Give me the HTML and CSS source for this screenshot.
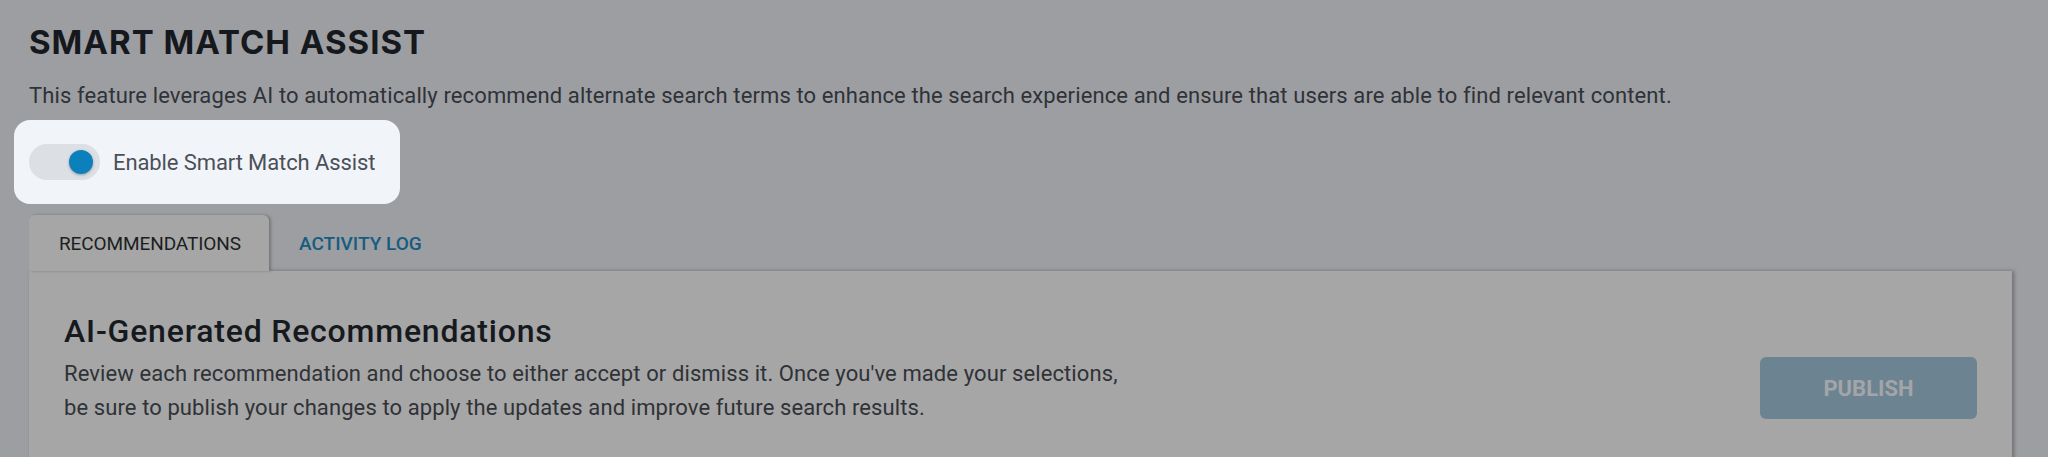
FILE: index.html
```html
<!DOCTYPE html>
<html lang="en">
<head>
  <meta charset="UTF-8">
  <title>Smart Match Assist</title>
  <meta name="viewport" content="width=device-width, initial-scale=1">
  <link rel="stylesheet" href="styles.css">
</head>
<body>

<div class="page">
  <h1 class="page-title">SMART MATCH ASSIST</h1>
  <p class="page-intro">This feature leverages AI to automatically recommend alternate search terms to enhance the search experience and ensure that users are able to find relevant content.</p>

  <label class="switch-row">
    <span class="switch on"><span class="knob"></span></span>
    <span class="switch-label">Enable Smart Match Assist</span>
  </label>

  <div class="tabs">
    <button class="tab active">RECOMMENDATIONS</button>
    <button class="tab">ACTIVITY LOG</button>
  </div>

  <div class="panel">
    <div class="panel-head">
      <div class="panel-text">
        <h2 class="panel-title">AI-Generated Recommendations</h2>
        <p class="panel-desc">Review each recommendation and choose to either accept or dismiss it. Once you've made your selections, be sure to publish your changes to apply the updates and improve future search results.</p>
      </div>
      <button class="btn-publish" disabled>PUBLISH</button>
    </div>
  </div>
</div>

</body>
</html>
```

FILE: styles.css
```css
* {
  box-sizing: border-box;
}

body {
  margin: 0;
  background: #9d9ea2;
  font-family: Roboto, Arial, sans-serif;
  color: #2f3237;
  overflow: hidden;
}

.page {
  padding: 22px 36px 0 29px;
}

.page-title {
  margin: 0;
  font-family: Inter, Arial, sans-serif;
  font-size: 33px;
  line-height: 40px;
  font-weight: 700;
  letter-spacing: 1px;
  color: #15181d;
}

.page-intro {
  margin: 19px 0 0;
  font-size: 22px;
  line-height: 30px;
  letter-spacing: 0.12px;
  color: #2f3237;
}

/* highlighted toggle row */
.switch-row {
  display: flex;
  align-items: center;
  gap: 13px;
  width: fit-content;
  height: 84px;
  margin: 9px 0 0 -15px;
  padding: 0 25px 0 15px;
  background: #f1f4f9;
  border-radius: 16px;
  cursor: pointer;
}

.switch {
  display: flex;
  align-items: center;
  width: 71px;
  height: 36px;
  padding: 0 7px;
  background: #dcdfe4;
  border-radius: 18px;
}

.switch.on {
  justify-content: flex-end;
}

.knob {
  width: 24px;
  height: 24px;
  border-radius: 50%;
  background: #0b80bd;
  box-shadow: 0 1px 3px rgba(0, 0, 0, 0.3);
}

.switch-label {
  font-size: 22px;
  letter-spacing: -0.1px;
  white-space: nowrap;
  color: #4b5058;
}

.tabs {
  display: flex;
  margin-top: 11px;
}

.tab {
  height: 56px;
  padding: 0 30px;
  border: none;
  background: none;
  font-family: Roboto, Arial, sans-serif;
  font-size: 19px;
  font-weight: 500;
  color: #145d80;
  cursor: pointer;
}

.tab.active {
  width: 240px;
  background: #a6a6a6;
  color: #1b1e22;
  font-weight: 400;
  letter-spacing: -0.1px;
  border-radius: 6px 6px 0 0;
  box-shadow: 2px 0 3px rgba(0, 0, 0, 0.25);
}

.panel {
  height: 200px;
  padding: 40px 35px;
  background: #a6a6a6;
  box-shadow: 2px 0 4px rgba(0, 0, 0, 0.3);
}

.panel-head {
  display: flex;
  justify-content: space-between;
  align-items: flex-end;
}

.panel-title {
  margin: 0;
  font-size: 32px;
  line-height: 40px;
  font-weight: 500;
  letter-spacing: 0.8px;
  color: #16191e;
}

.panel-desc {
  max-width: 1080px;
  margin: 6px 0 0;
  font-size: 22px;
  line-height: 34px;
  letter-spacing: 0.1px;
  color: #2f3237;
}

.btn-publish {
  width: 217px;
  height: 62px;
  margin-bottom: 6px;
  border: none;
  border-radius: 6px;
  background: #6c8392;
  font-family: Roboto, Arial, sans-serif;
  font-size: 22px;
  font-weight: 700;
  color: #a3a5a7;
}
```
